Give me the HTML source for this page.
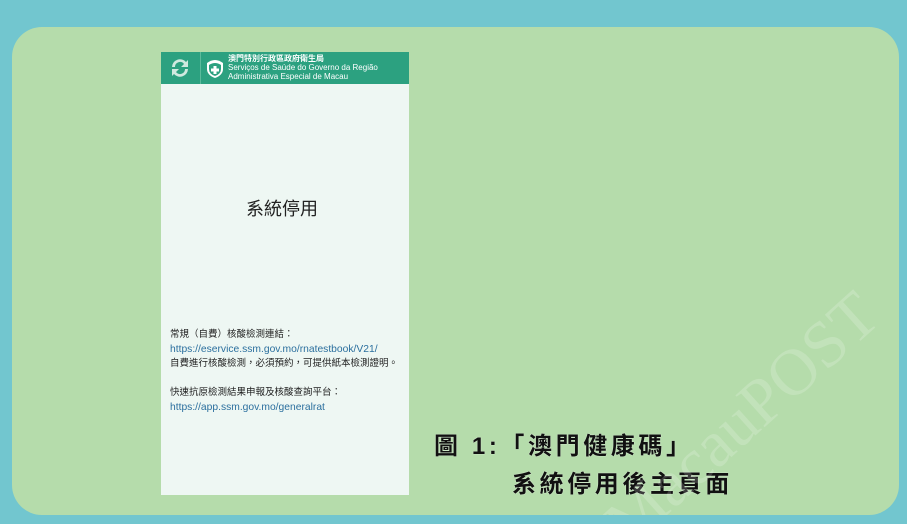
<!DOCTYPE html>
<html style="overflow:hidden;width:907px;height:524px"><head><meta charset="utf-8"><style>
body{margin:0;width:907px;height:524px;background:#72c6cf;position:relative;overflow:hidden;font-family:"Liberation Sans","Noto Sans CJK TC",sans-serif}
.panel{position:absolute;left:12px;top:27px;width:887px;height:488px;background:#b5dcab;border-radius:30px}
.phone{position:absolute;left:161px;top:52px;width:248px;height:443px;background:#eef7f3}
.hdr{position:absolute;left:0;top:0;width:248px;height:32px;background:#2ca180;color:#fff}
.t{position:absolute;color:#222;white-space:nowrap}
.a{color:#2b6f9e;font-size:10.3px}
.cap{position:absolute;font-weight:bold;font-size:24px;color:#111;white-space:nowrap;letter-spacing:3.6px;text-shadow:0 0 1px #fff}
</style></head><body>
<div class="panel"></div>
<div class="phone">
 <div class="hdr">
  <svg style="position:absolute;left:7px;top:5px" width="24" height="22" viewBox="0 0 24 22"><path d="M4 10a8 8 0 0 1 14-5l2-2v7h-7l3-3a5 5 0 0 0-9 3z M20 12a8 8 0 0 1-14 5l-2 2v-7h7l-3 3a5 5 0 0 0 9-3z" fill="#cfe9df"/></svg>
  <div style="position:absolute;left:39px;top:0;width:1px;height:32px;background:#5bbb9c"></div>
  <svg style="position:absolute;left:44px;top:5px" width="20" height="22" viewBox="0 0 20 22"><path d="M2 6q8-6 16 0v6q0 6-8 9q-8-3-8-9z" fill="#fff"/><path d="M4 8q6-4 12 0v4q0 5-6 7q-6-2-6-7z" fill="#2ca180"/><path d="M8.5 9h3v2.5h2.5v3h-2.5v2.5h-3v-2.5h-2.5v-3h2.5z" fill="#fff"/></svg>
  <div style="position:absolute;left:67px;top:2px;font-size:8px;line-height:9px">
   <b>澳門特別行政區政府衛生局</b><br>Serviços de Saúde do Governo da Região<br>Administrativa Especial de Macau</div>
 </div>
 <div class="t" style="left:85px;top:143px;font-size:18px">系統停用</div>
 <div class="t" style="left:9px;top:276px;font-size:9.5px;line-height:14.5px">常規（自費）核酸檢測連結：<br><span class="a">https://eservice.ssm.gov.mo/rnatestbook/V21/</span><br>自費進行核酸檢測，必須預約，可提供紙本檢測證明。<br><br>快速抗原檢測結果申報及核酸查詢平台：<br><span class="a">https://app.ssm.gov.mo/generalrat</span></div>
</div>
<div class="cap" style="left:434px;top:426px">圖 1:「澳門健康碼」</div>
<div class="cap" style="left:512px;top:464px">系統停用後主頁面</div>
<div style="position:absolute;left:590px;top:0;width:300px;height:515px;overflow:hidden"><div style="position:absolute;left:0;top:505px;font-family:'Liberation Serif',serif;font-size:66px;color:rgba(255,255,255,0.18);transform:rotate(-42deg);transform-origin:left top;white-space:nowrap">MacauPOST</div></div>
</body></html>
